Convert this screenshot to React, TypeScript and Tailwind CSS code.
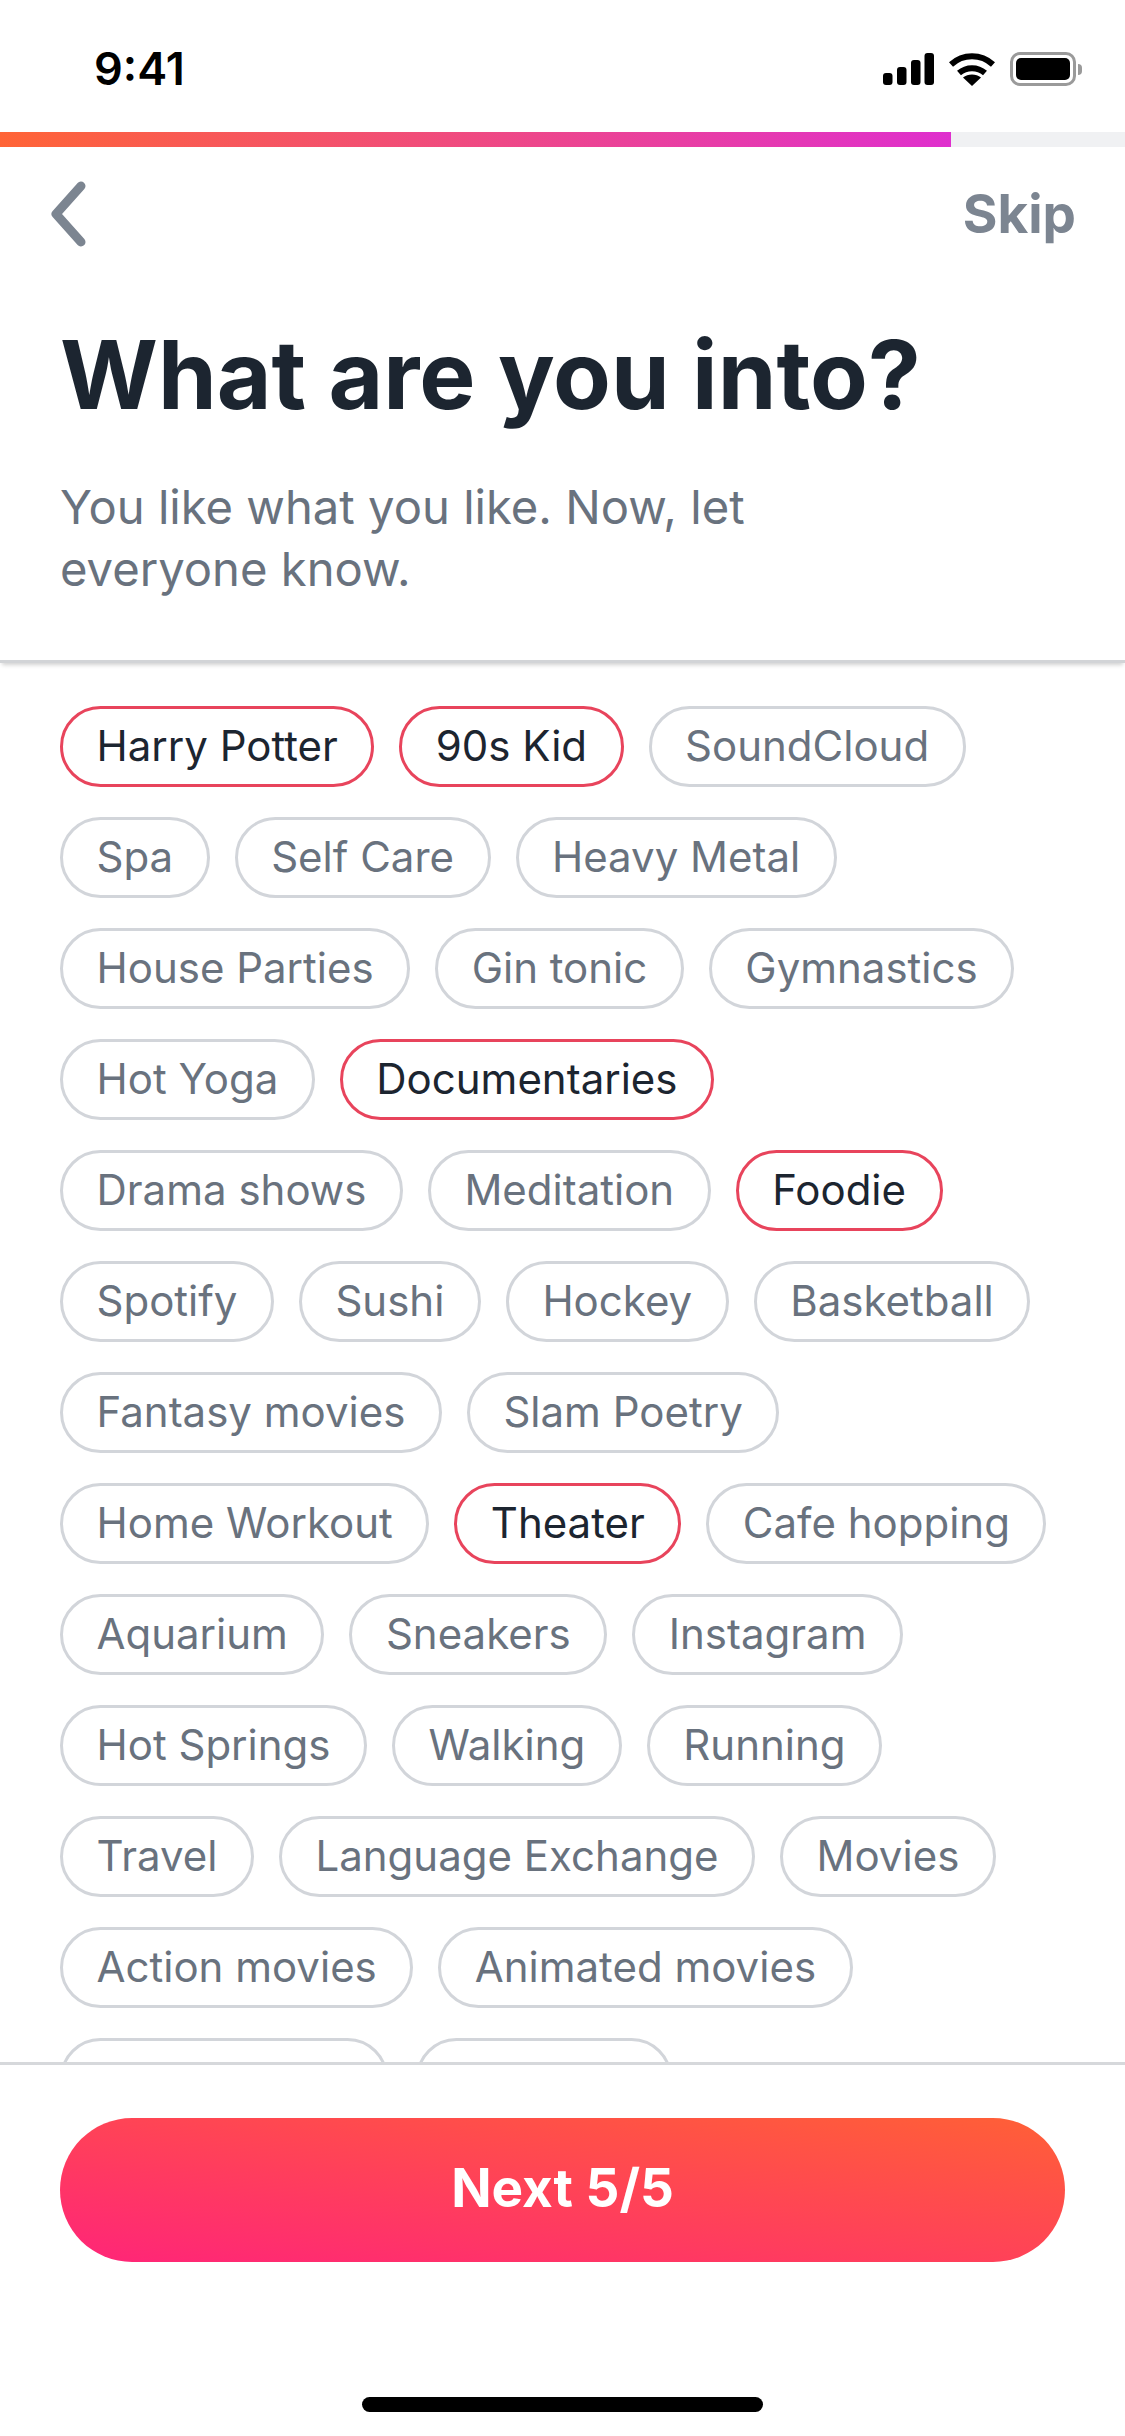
const rows: { label: string; on?: boolean }[][] = [
  [{ label: 'Harry Potter', on: true }, { label: '90s Kid', on: true }, { label: 'SoundCloud' }],
  [{ label: 'Spa' }, { label: 'Self Care' }, { label: 'Heavy Metal' }],
  [{ label: 'House Parties' }, { label: 'Gin tonic' }, { label: 'Gymnastics' }],
  [{ label: 'Hot Yoga' }, { label: 'Documentaries', on: true }],
  [{ label: 'Drama shows' }, { label: 'Meditation' }, { label: 'Foodie', on: true }],
  [{ label: 'Spotify' }, { label: 'Sushi' }, { label: 'Hockey' }, { label: 'Basketball' }],
  [{ label: 'Fantasy movies' }, { label: 'Slam Poetry' }],
  [{ label: 'Home Workout' }, { label: 'Theater', on: true }, { label: 'Cafe hopping' }],
  [{ label: 'Aquarium' }, { label: 'Sneakers' }, { label: 'Instagram' }],
  [{ label: 'Hot Springs' }, { label: 'Walking' }, { label: 'Running' }],
  [{ label: 'Travel' }, { label: 'Language Exchange' }, { label: 'Movies' }],
  [{ label: 'Action movies' }, { label: 'Animated movies' }],
]

function Chip({ label, on }: { label: string; on?: boolean }) {
  return (
    <div
      className={`flex h-[81px] items-center rounded-full border-[3px] px-[33.5px] pb-[2px] text-[42px] leading-none whitespace-nowrap ${
        on ? 'border-[#e8445c] text-[#1c2530]' : 'border-[#d2d5da] text-[#69727e]'
      }`}
    >
      {label}
    </div>
  )
}

function StatusIcons() {
  return (
    <div className="flex items-center gap-[15px]">
      <svg width="51" height="32" viewBox="0 0 51 32" fill="#000">
        <rect x="0" y="20" width="9.5" height="12" rx="3" />
        <rect x="14" y="14" width="9.5" height="18" rx="3" />
        <rect x="28" y="7" width="9.5" height="25" rx="3" />
        <rect x="41.5" y="0" width="9.5" height="32" rx="3" />
      </svg>
      <svg width="46" height="33" viewBox="0 0 46 33" fill="none">
        <path d="M2 11.5C14 0.5 32 0.5 44 11.5" stroke="#000" strokeWidth="6" />
        <path d="M10 20C17.5 13.5 28.5 13.5 36 20" stroke="#000" strokeWidth="6" />
        <path d="M23 33L14 24.5C19 20.5 27 20.5 32 24.5Z" fill="#000" />
      </svg>
      <div className="flex items-center gap-[2px]">
        <div className="flex h-[34px] w-[66px] items-center justify-center rounded-[10px] border-[3px] border-[#9a9a9a]">
          <div className="h-[22px] w-[54px] rounded-[5px] bg-black" />
        </div>
        <div className="h-[11px] w-[4px] rounded-r-full bg-[#9a9a9a]" />
      </div>
    </div>
  )
}

export default function App() {
  return (
    <div className="flex h-[2436px] w-[1125px] flex-col overflow-hidden bg-white font-['Inter',sans-serif]">
      <div className="flex h-[132px] items-start justify-between pt-[49px] pr-[43px] pl-[94px]">
        <span className="text-[45px] leading-[40px] font-semibold text-black">9:41</span>
        <div className="pt-[3px]">
          <StatusIcons />
        </div>
      </div>

      <div className="h-[15px] bg-[#f0f1f3]">
        <div className="h-full w-[951px] bg-linear-to-r/srgb from-[#ff6436] to-[#df2fce]" />
      </div>

      <div className="flex h-[134px] items-center justify-between pr-[49px] pl-[48px]">
        <svg width="38" height="68" viewBox="0 0 38 68" fill="none">
          <path d="M33 6L8 34L33 62" stroke="#7c8591" strokeWidth="9" strokeLinecap="round" strokeLinejoin="round" />
        </svg>
        <span className="text-[53px] leading-none font-bold text-[#7c8591]">Skip</span>
      </div>

      <div className="relative z-10 h-[382px] border-b-[3px] border-[#d2d4d7] bg-white px-[60px] pt-[44px] shadow-[0_4px_4px_-2px_rgba(0,0,0,0.18)]">
        <h1 className="text-[94.4px] leading-[100px] font-bold text-[#1c2530]">What are you into?</h1>
        <p className="mt-[51px] w-[800px] text-[47.2px] leading-[62px] text-[#69727e]">
          You like what you like. Now, let everyone know.
        </p>
      </div>

      <div className="flex min-h-0 flex-1 flex-col gap-[30px] overflow-hidden px-[60px] pt-[43px]">
        {rows.map((row, i) => (
          <div key={i} className="flex shrink-0 gap-[25px]">
            {row.map((c) => (
              <Chip key={c.label} label={c.label} on={c.on} />
            ))}
          </div>
        ))}
        <div className="flex shrink-0 gap-[28px]">
          <div className="h-[81px] w-[328px] rounded-full border-[3px] border-[#d2d5da]" />
          <div className="h-[81px] w-[256px] rounded-full border-[3px] border-[#d2d5da]" />
        </div>
      </div>

      <div className="flex h-[374px] flex-col items-center border-t-[3px] border-[#d6d8db] bg-white px-[60px] pt-[53px]">
        <div className="flex h-[144px] w-full items-center justify-center rounded-full bg-linear-to-tr/srgb from-[#ff2578] to-[#ff6036] pb-[3px] text-[53px] font-bold text-white">
          Next 5/5
        </div>
        <div className="mt-[135px] h-[15px] w-[401px] rounded-full bg-black" />
      </div>
    </div>
  )
}
